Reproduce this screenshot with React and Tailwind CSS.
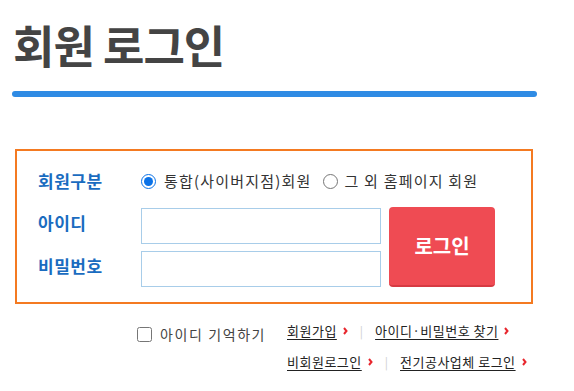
const Chevron = () => (
  <svg className="ml-[6px] w-[5px] h-[8px]" viewBox="0 0 5 8" fill="none">
    <path d="M1 1l2.5 3L1 7" stroke="#e8262d" strokeWidth="2" />
  </svg>
);

const LinkItem = ({ children }) => (
  <a href="#" className="flex items-center text-[13px] tracking-[0.5px] text-[#222] underline underline-offset-[3px] decoration-[#222]">
    <span>{children}</span>
    <Chevron />
  </a>
);

const Sep = () => <span className="mx-[12px] text-[12px] text-[#d0d0d0]">|</span>;

export default function App() {
  return (
    <div
      className="w-[574px] h-[391px] bg-white overflow-hidden"
      style={{ fontFamily: '"Noto Sans CJK KR", "Noto Sans", sans-serif' }}
    >
      <h1 className="pl-[13px] pt-[16px] text-[45px] leading-[58px] font-bold text-[#444] tracking-[-1px]">
        회원 로그인
      </h1>
      <div className="ml-[12px] mt-[17px] w-[525px] h-[6px] rounded-full bg-[#2f8be4]" />

      <div className="ml-[15px] mt-[52px] w-[518px] h-[155px] border-2 border-[#f47a21] pl-[21px] pt-[18px]">
        <div className="flex items-center h-[24px]">
          <span className="w-[103px] text-[17px] tracking-[0.5px] font-bold text-[#1a6cc0]">회원구분</span>
          <label className="flex items-center text-[15px] tracking-[1.2px] text-[#333]">
            <input type="radio" name="kind" defaultChecked className="w-[15px] h-[15px] m-0 accent-[#0b72e7]" />
            <span className="ml-[8px]">통합(사이버지점)회원</span>
          </label>
          <label className="flex items-center ml-[11px] text-[15px] tracking-[1.2px] text-[#333]">
            <input type="radio" name="kind" className="w-[15px] h-[15px] m-0" />
            <span className="ml-[7px]">그 외 홈페이지 회원</span>
          </label>
        </div>

        <div className="flex mt-[15px]">
          <div className="flex flex-col gap-[7px]">
            <div className="flex items-center">
              <span className="w-[103px] mb-[6px] text-[17px] tracking-[0.5px] font-bold text-[#1a6cc0]">아이디</span>
              <input type="text" className="w-[240px] h-[36px] border border-[#a8cde9] outline-none px-2" />
            </div>
            <div className="flex items-center">
              <span className="w-[103px] mb-[6px] text-[17px] tracking-[0.5px] font-bold text-[#1a6cc0]">비밀번호</span>
              <input type="password" className="w-[240px] h-[36px] border border-[#a8cde9] outline-none px-2" />
            </div>
          </div>
          <button className="ml-[8px] -mt-[1px] w-[106px] h-[80px] rounded-[4px] bg-[#ef4b53] border-b-2 border-[#d63a42] text-white text-[20px] font-bold">
            로그인
          </button>
        </div>
      </div>

      <div className="flex pl-[137px] mt-[16px]">
        <label className="flex items-start pt-[4px] w-[150px] text-[14px] text-[#444] tracking-[1.6px]">
          <input type="checkbox" className="w-[15px] h-[15px] m-0 mt-[3px]" />
          <span className="ml-[8px] leading-[20px]">아이디 기억하기</span>
        </label>
        <div className="flex flex-col gap-[9px]">
          <div className="flex items-center h-[22px]">
            <LinkItem>회원가입</LinkItem>
            <Sep />
            <LinkItem>아이디·비밀번호 찾기</LinkItem>
          </div>
          <div className="flex items-center h-[22px]">
            <LinkItem>비회원로그인</LinkItem>
            <Sep />
            <LinkItem>전기공사업체 로그인</LinkItem>
          </div>
        </div>
      </div>
    </div>
  );
}
